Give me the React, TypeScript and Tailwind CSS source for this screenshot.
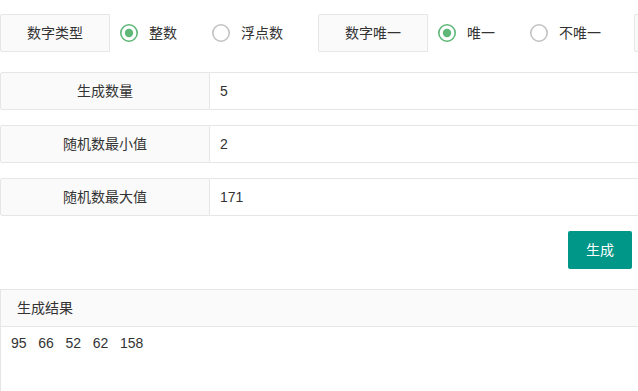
import React from "react";

function Radio({ checked, label, width }: { checked: boolean; label: string; width: number }) {
  return (
    <div className="flex items-center h-[38px] shrink-0" style={{ width }}>
      <svg width="18" height="18" viewBox="0 0 18 18" className="shrink-0">
        <circle cx="9" cy="9" r="8.2" fill="white" stroke={checked ? "#5FB878" : "#c2c2c2"} strokeWidth="1.6" />
        {checked && <circle cx="9" cy="9" r="4.2" fill="#5FB878" />}
      </svg>
      <span className="ml-[11px] text-[14px] text-[#333] whitespace-nowrap">{label}</span>
    </div>
  );
}

function Row({ label, value }: { label: string; value: string }) {
  return (
    <div className="flex h-[38px] w-[700px]">
      <div className="w-[210px] shrink-0 h-full flex items-center justify-center bg-[#fafafa] border border-[#e6e6e6] rounded-l-[2px] text-[14px] text-[#333]">
        {label}
      </div>
      <div className="flex-1 h-full flex items-center pl-[10px] border border-l-0 border-[#e6e6e6] bg-white text-[14px] text-[#333]">
        {value}
      </div>
    </div>
  );
}

export default function App() {
  return (
    <div
      className="w-[638px] h-[391px] overflow-hidden bg-white relative"
      style={{ fontFamily: '"Liberation Sans", "Noto Sans CJK SC", sans-serif' }}
    >
      <div className="pt-[14px] flex items-center w-[720px]">
        <div className="w-[110px] h-[38px] shrink-0 flex items-center justify-center bg-[#fafafa] border border-[#e6e6e6] rounded-l-[2px] text-[14px] text-[#333]">
          数字类型
        </div>
        <div className="w-[10px] shrink-0" />
        <Radio checked label="整数" width={92} />
        <Radio checked={false} label="浮点数" width={106} />
        <div className="w-[110px] h-[38px] shrink-0 flex items-center justify-center bg-[#fafafa] border border-[#e6e6e6] rounded-l-[2px] text-[14px] text-[#333]">
          数字唯一
        </div>
        <div className="w-[10px] shrink-0" />
        <Radio checked label="唯一" width={92} />
        <Radio checked={false} label="不唯一" width={104} />
        <div className="w-[110px] h-[38px] shrink-0 bg-[#fafafa] border border-[#e6e6e6] rounded-l-[2px]" />
      </div>

      <div className="mt-[20px] flex flex-col gap-[15px]">
        <Row label="生成数量" value="5" />
        <Row label="随机数最小值" value="2" />
        <Row label="随机数最大值" value="171" />
      </div>

      <div className="mt-[15px] flex justify-end pr-[6px]">
        <button className="w-[64px] h-[38px] rounded-[2px] bg-[#009688] text-white text-[14px] flex items-center justify-center">
          生成
        </button>
      </div>

      <div className="mt-[20px] w-[700px]">
        <div className="h-[38px] flex items-center pl-[16px] bg-[#fafafa] border border-[#e6e6e6] text-[14px] text-[#333]">
          生成结果
        </div>
        <div className="h-[100px] border-l border-[#e6e6e6] pl-[10px] pt-[6px] text-[14px] text-[#333] whitespace-pre">
          {"95   66   52   62   158"}
        </div>
      </div>
    </div>
  );
}
